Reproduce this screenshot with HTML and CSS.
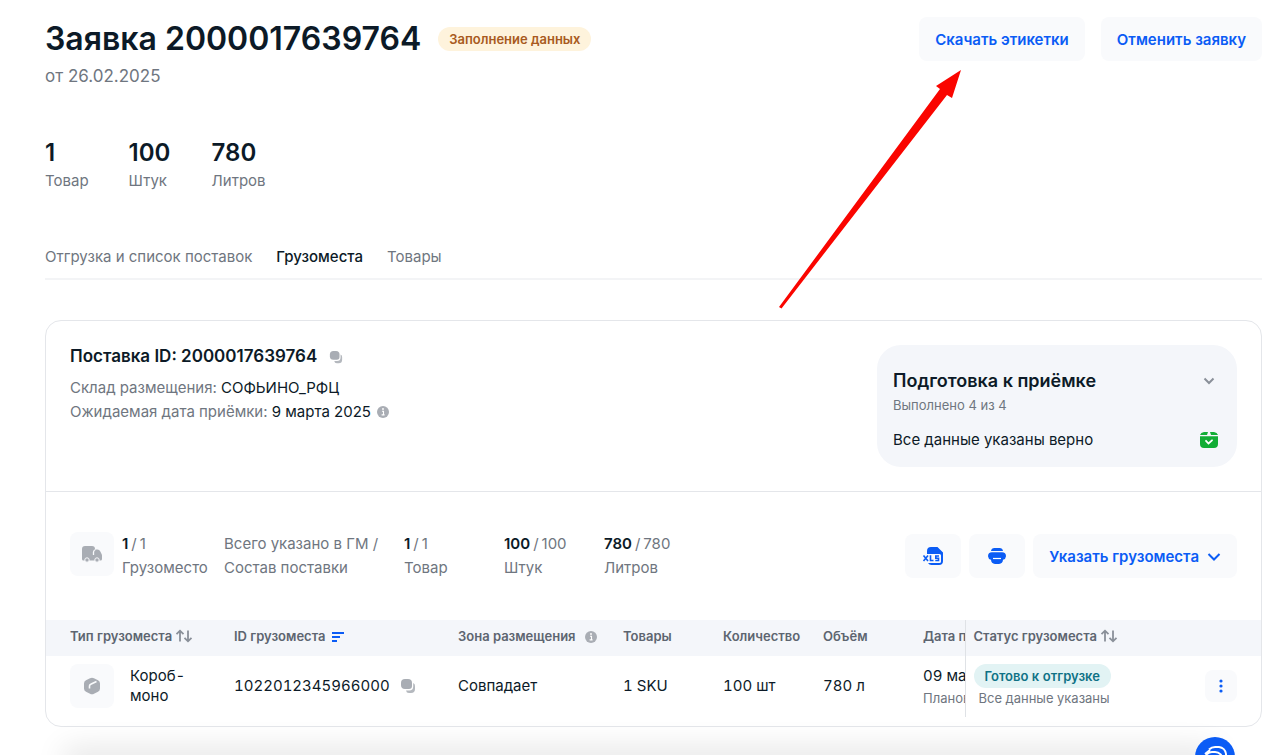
FILE: index.html
```html
<!DOCTYPE html>
<html lang="ru">
<head>
<meta charset="utf-8">
<meta name="viewport" content="width=device-width, initial-scale=1">
<title>Заявка 2000017639764</title>
<link rel="stylesheet" href="styles.css">
</head>
<body>
<svg class="defs" aria-hidden="true">
  <symbol id="copy" viewBox="0 0 16 16"><path fill="#a9adb4" d="M5 1h3a4 4 0 0 1 4 4v3a3 3 0 0 1-3 3H5a4 4 0 0 1-4-4V5a4 4 0 0 1 4-4z"/><path fill="#b4b8be" d="M13.200 5A3 3 0 0 1 15 8v3a4 4 0 0 1-4 4H9a3 3 0 0 1-3-2.500H9.200a4 4 0 0 0 4-4z"/></symbol>
  <symbol id="info" viewBox="0 0 12 12"><circle cx="6" cy="6" r="6" fill="#a9adb4"/><path d="M5 5.200h1.500v3.600M4.600 8.900h3" fill="none" stroke="#fff" stroke-width="1.100"/><circle cx="6" cy="3" r=".9" fill="#fff"/></symbol>
  <symbol id="sort" viewBox="0 0 18 14"><path d="M5 12.500V2M1.500 5.200 5 1.700 8.500 5.200M13 1.500v11M9.500 8.800l3.500 3.500 3.500-3.500" fill="none" stroke="#8a9099" stroke-width="1.800"/></symbol>
</svg>
<main class="page">
  <header class="page-head">
    <div>
      <div class="title-row">
        <h1 class="title">Заявка 2000017639764</h1>
        <span class="badge badge-draft">Заполнение данных</span>
      </div>
      <p class="date">от 26.02.2025</p>
    </div>
    <div class="head-actions">
      <button class="btn" type="button">Скачать этикетки</button>
      <button class="btn" type="button">Отменить заявку</button>
    </div>
  </header>

  <dl class="totals">
    <div class="total"><dd>1</dd><dt>Товар</dt></div>
    <div class="total"><dd>100</dd><dt>Штук</dt></div>
    <div class="total"><dd>780</dd><dt>Литров</dt></div>
  </dl>

  <nav class="tabs">
    <a href="#shipment">Отгрузка и список поставок</a>
    <a class="active" href="#cargo" aria-current="page">Грузоместа</a>
    <a href="#goods">Товары</a>
  </nav>

  <section class="card">
    <div class="supply">
      <div class="supply-info">
        <h2 class="supply-title">Поставка ID: 2000017639764 <button class="icon-btn" type="button" aria-label="Копировать"><svg width="14" height="14"><use href="#copy"/></svg></button></h2>
        <p>Склад размещения: <b>СОФЬИНО_РФЦ</b></p>
        <p>Ожидаемая дата приёмки: <b>9 марта 2025</b> <svg class="info" width="12" height="12"><use href="#info"/></svg></p>
      </div>
      <section class="prep">
        <div class="prep-row">
          <h3>Подготовка к приёмке</h3>
          <button class="icon-btn prep-toggle" type="button" aria-label="Развернуть"><svg width="12" height="8" viewBox="0 0 12 8"><path d="M1.500 1.500 6 6l4.500-4.500" fill="none" stroke="#8a9099" stroke-width="2"/></svg></button>
        </div>
        <p class="prep-count">Выполнено 4 из 4</p>
        <div class="prep-row prep-status">
          <span>Все данные указаны верно</span>
          <svg width="20" height="18" viewBox="0 0 20 18"><path fill="#12ad35" d="M5 1h4L8 4H1a5 4 0 0 1 4-3zM11 1h4a5 4 0 0 1 4 3h-7zM1 5.200h18V13a4 4 0 0 1-4 4H5a4 4 0 0 1-4-4z"/><path d="m7 9.800 2.500 2.700L13 9.300" fill="none" stroke="#fff" stroke-width="1.800" stroke-linecap="round"/></svg>
        </div>
      </section>
    </div>

    <div class="summary">
      <span class="tile"><svg width="22" height="18" viewBox="0 0 22 18"><path fill="#a9adb4" d="M4 1h7a3 3 0 0 1 3 3v.5h2.500a3 3 0 0 1 2.700 1.700l1.500 3a4 4 0 0 1 .3 1.500V14a1.500 1.500 0 0 1-1.500 1.500H2.500A1.500 1.500 0 0 1 1 14V4a3 3 0 0 1 3-3z"/><path d="M14.500 4.500a3 3 0 0 0-2 2.500v3" fill="none" stroke="#f9fafc" stroke-width="1.300"/><circle cx="6" cy="15" r="2.200" fill="#a9adb4" stroke="#f9fafc"/><circle cx="16" cy="15" r="2.200" fill="#a9adb4" stroke="#f9fafc"/></svg></span>
      <div class="metrics">
        <p><strong>1</strong><i>/</i>1<br>Грузоместо</p>
        <p>Всего указано в ГМ /<br>Состав поставки</p>
        <p><strong>1</strong><i>/</i>1<br>Товар</p>
        <p><strong>100</strong><i>/</i>100<br>Штук</p>
        <p><strong>780</strong><i>/</i>780<br>Литров</p>
      </div>
      <div class="tools">
        <button class="btn btn-icon" type="button" aria-label="Скачать XLS"><svg width="22" height="20" viewBox="0 0 22 20"><path fill="#0b5cf5" d="M9 1h6.500L21 6.500V15a4 4 0 0 1-4 4H9.500a4 4 0 0 1-3.500-2h11.500a1.500 1.500 0 0 0 1.500-1.500V9.500A1.500 1.500 0 0 0 17.500 8H5V5a4 4 0 0 1 4-4z"/><path d="M1.500 9.500 6 15M6 9.500 1.500 15M8.500 9.200v5.300h3M17 10h-3.200v2.200h2.700v2.300h-3.200" fill="none" stroke="#0b5cf5" stroke-width="1.600"/></svg></button>
        <button class="btn btn-icon" type="button" aria-label="Печать"><svg width="18" height="18" viewBox="0 0 18 18"><path fill="#0b5cf5" d="M6.500 1h5A3.500 3.500 0 0 1 15 4H3a3.500 3.500 0 0 1 3.500-3zM4 5.200h10a4 4 0 0 1 4 4 4 4 0 0 1-3 3.600A4.500 4.500 0 0 1 11 17H7a4.500 4.500 0 0 1-4-4.200 4 4 0 0 1-3-3.600 4 4 0 0 1 4-4z"/><path d="M5 11.500h8" stroke="#fff" stroke-width="1.200"/></svg></button>
        <button class="btn" type="button">Указать грузоместа <svg width="14" height="8" viewBox="0 0 14 8"><path d="m1.500 1 5.500 5.500L12.500 1" fill="none" stroke="#0b5cf5" stroke-width="2"/></svg></button>
      </div>
    </div>

    <table class="cargo">
      <colgroup><col class="c-type"><col class="c-id"><col class="c-zone"><col class="c-num"><col class="c-num"><col class="c-num"><col class="c-date"><col><col class="c-menu"></colgroup>
      <thead>
        <tr>
          <th>Тип грузоместа <svg width="18" height="14"><use href="#sort"/></svg></th>
          <th>ID грузоместа <svg class="sorted" width="14" height="12" viewBox="0 0 14 12"><path d="M1 2h12M1 6h8M1 10h5" stroke="#0b5cf5" stroke-width="2"/></svg></th>
          <th>Зона размещения <svg class="info" width="12" height="12"><use href="#info"/></svg></th>
          <th>Товары</th>
          <th>Количество</th>
          <th>Объём</th>
          <th class="cut">Дата п</th>
          <th class="status" colspan="2">Статус грузоместа <svg width="18" height="14"><use href="#sort"/></svg></th>
        </tr>
      </thead>
      <tbody>
        <tr>
          <td><div class="type"><span class="tile"><svg width="18" height="18" viewBox="0 0 18 18"><path fill="#a9adb4" d="M7 1.300a4 4 0 0 1 4 0l4 2a3.500 3.500 0 0 1 2 3.200v5a3.500 3.500 0 0 1-2 3.200l-4 2a4 4 0 0 1-4 0l-4-2a3.500 3.500 0 0 1-2-3.200v-5a3.500 3.500 0 0 1 2-3.200z"/><path d="M6.500 11.500V9a2 2 0 0 1 1.200-1.800L13.500 4.500" fill="none" stroke="#f9fafc" stroke-width="1.600"/></svg></span><span>Короб-<br>моно</span></div></td>
          <td><span class="cargo-id">1022012345966000</span><button class="icon-btn" type="button" aria-label="Копировать"><svg width="16" height="16"><use href="#copy"/></svg></button></td>
          <td>Совпадает</td>
          <td>1 SKU</td>
          <td>100 шт</td>
          <td>780 л</td>
          <td class="cut">09 ма<small>Планов</small></td>
          <td class="status"><span class="badge badge-ready">Готово к отгрузке</span><small>Все данные указаны</small></td>
          <td class="menu"><button class="btn btn-menu" type="button" aria-label="Действия"><svg width="4" height="14" viewBox="0 0 4 14" fill="#0b5cf5"><circle cx="2" cy="2" r="1.600"/><circle cx="2" cy="7" r="1.600"/><circle cx="2" cy="12" r="1.600"/></svg></button></td>
        </tr>
      </tbody>
    </table>
  </section>
</main>

<svg class="pointer" width="184" height="240" viewBox="0 0 184 240" aria-hidden="true"><path fill="#fa0500" d="M182 1 157 17l4 3L0 238l2.500 1.500L168 26l5 3z"/></svg>
<div class="bottom-shade"></div>
<button class="chat" type="button" aria-label="Чат"><svg width="26" height="24" viewBox="0 0 26 24" fill="none" stroke="#fff" stroke-width="2"><path d="M7 4.500A9 9 0 0 1 14 2h3a8 8 0 0 1 7 7c.5 4-1 8-4 10"/><path d="M10 7h3a8 8 0 0 1 8 8v6H10a7 7 0 0 1 0-14zM8 5l-5 4"/></svg></button>
</body>
</html>
```

FILE: styles.css
```css
* { box-sizing: border-box; }
body {
  margin: 0;
  background: #fff;
  color: #0c1a27;
  font: 15px/24px Inter, "Noto Sans", sans-serif;
  overflow: hidden;
}
h1, h2, h3, p, dl, dd { margin: 0; }
button { font: inherit; border: 0; background: none; padding: 0; cursor: pointer; }
.defs { display: none; }

.page { padding: 17px 18px 28px 45px; }
.page-head { display: flex; justify-content: space-between; align-items: flex-start; }
.title-row { display: flex; align-items: center; gap: 17px; }
.title { font-size: 32px; line-height: 44px; font-weight: 600; }
.badge {
  display: inline-block;
  padding: 0 11px;
  border-radius: 12px;
  font-size: 13px;
  line-height: 24px;
  font-weight: 600;
}
.badge-draft { background: #fef3dc; color: #a85a20; }
.badge-ready { background: #e2f3f4; color: #0f7286; }
.date { padding-top: 3px; font-size: 17px; color: #6f7680; }
.head-actions { display: flex; gap: 16px; }
.btn {
  display: inline-flex;
  align-items: center;
  justify-content: center;
  gap: 8px;
  height: 44px;
  padding: 2px 16px 0;
  border-radius: 8px;
  background: #f9fafc;
  color: #0b5cf5;
  font-weight: 600;
  white-space: nowrap;
}
.btn-icon { width: 56px; padding-top: 0; }
.btn-menu { width: 32px; height: 32px; padding: 0; vertical-align: middle; }
.icon-btn { display: inline-flex; }

.totals { display: flex; gap: 40px; padding-top: 49px; }
.total { display: flex; flex-direction: column; min-width: 43px; }
.total dd { font-size: 24px; line-height: 32px; font-weight: 600; }
.total dt { color: #6f7680; }

.tabs {
  display: flex;
  gap: 24px;
  margin-top: 52px;
  padding-bottom: 9px;
  border-bottom: 2px solid #f3f4f6;
}
.tabs a { color: #6f7680; text-decoration: none; }
.tabs .active { color: #0c1a27; font-weight: 500; }

.card { margin-top: 40px; padding-bottom: 9px; border: 1px solid #e4e6ea; border-radius: 16px; }
.supply {
  display: flex;
  justify-content: space-between;
  padding: 24px;
  border-bottom: 1px solid #e4e6ea;
}
.supply-info p { color: #6f7680; }
.supply-info b { color: #0c1a27; font-weight: 400; }
.supply-title { display: flex; align-items: center; gap: 12px; padding-bottom: 8px; font-size: 17px; line-height: 23px; font-weight: 600; }
.info { vertical-align: -1px; margin-left: 2px; }
.prep { width: 360px; padding: 24px 16px 15px; border-radius: 24px; background: #f4f6fa; }
.prep-row { display: flex; justify-content: space-between; align-items: center; }
.prep-row h3 { font-size: 18px; line-height: 24px; font-weight: 600; }
.prep-toggle { padding-right: 6px; }
.prep-status { padding: 11px 2px 0 0; }
.prep-count { font-size: 13px; color: #6f7680; }

.summary { display: flex; align-items: center; padding: 40px 24px; }
.summary .tile { align-self: flex-start; }
.tile {
  display: inline-flex;
  align-items: center;
  justify-content: center;
  flex: none;
  width: 44px;
  height: 44px;
  border-radius: 8px;
  background: #f9fafc;
}
.metrics {
  display: grid;
  grid-template-columns: 86px 164px 84px 84px 84px;
  gap: 16px;
  padding-left: 8px;
  color: #6f7680;
  white-space: nowrap;
}
.metrics strong { color: #0c1a27; font-weight: 600; }
.metrics i { margin: 0 3px; font-style: normal; }
.tools { display: flex; gap: 8px; margin-left: auto; }

.cargo { width: 100%; table-layout: fixed; border-collapse: collapse; }
.c-type { width: 176px; }
.c-id { width: 224px; }
.c-zone { width: 165px; }
.c-num { width: 100px; }
.c-date { width: 54px; }
.c-menu { width: 68px; }
.cargo th, .cargo td { padding: 0 0 2px 12px; text-align: left; white-space: nowrap; }
.cargo th:first-child, .cargo td:first-child { padding-left: 24px; }
.cargo th { height: 36px; line-height: 24px; padding-bottom: 4px; background: #f4f6fa; font-size: 13px; font-weight: 600; color: #5d6570; }
.cargo th svg { vertical-align: -2px; }
.cargo th .sorted { margin-left: 2px; }
.cargo th .info { margin-left: 6px; }
.cargo td { height: 61px; font-variant-numeric: tabular-nums; }
.cargo .cut { overflow: hidden; }
.cargo .status { padding-left: 8px; border-left: 1px solid #dfe2e6; }
.cargo td small { display: block; font-size: 13px; line-height: 20px; color: #6f7680; }
.cargo .status small { padding-left: 5px; }
.cargo-id { margin-right: 10px; }
.cargo .icon-btn { vertical-align: -3px; }
.type { display: flex; align-items: center; gap: 16px; line-height: 20px; }

.pointer { position: absolute; left: 779px; top: 69px; pointer-events: none; }
.bottom-shade {
  position: fixed;
  left: 70px;
  right: 70px;
  bottom: -10px;
  height: 10px;
  box-shadow: 0 0 30px 6px rgba(0, 0, 0, .12);
  pointer-events: none;
}
.chat {
  position: fixed;
  right: 45px;
  bottom: -22px;
  display: flex;
  align-items: center;
  justify-content: center;
  width: 40px;
  height: 40px;
  border-radius: 50%;
  background: #0b5cf5;
}
```
